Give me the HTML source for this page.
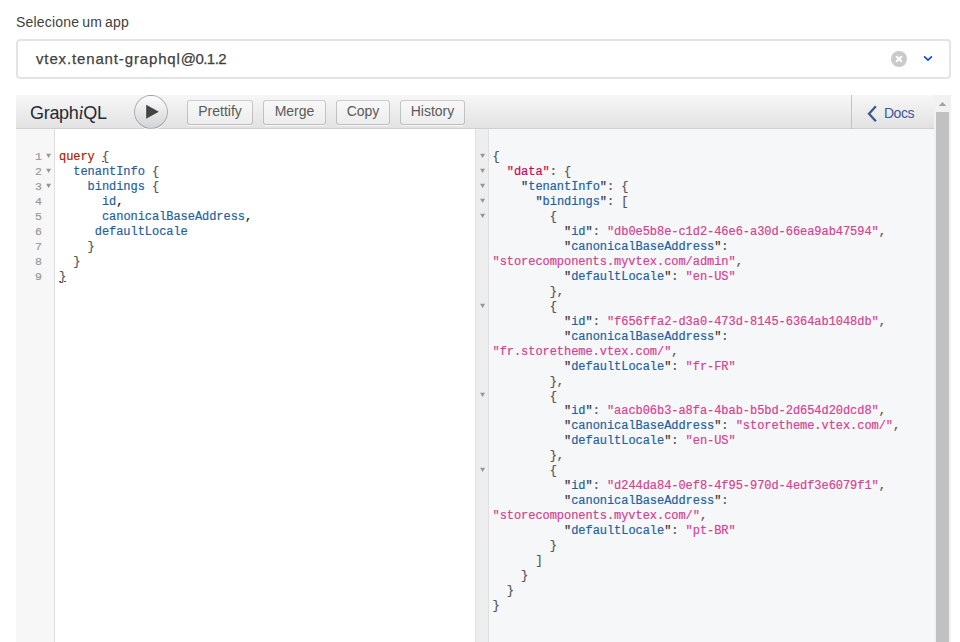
<!DOCTYPE html>
<html lang="pt-BR">
<head>
<meta charset="utf-8">
<title>GraphiQL</title>
<style>
*{box-sizing:border-box;margin:0;padding:0}
html,body{width:960px;height:642px;overflow:hidden;background:#fff}
body{position:relative;font-family:"Liberation Sans",sans-serif;color:#3f3f40}
.label{position:absolute;left:16px;top:12px;font-size:14px;line-height:20px;color:#3f3f40;letter-spacing:0.2px;word-spacing:-1.2px}
.select{position:absolute;left:16px;top:39px;width:935px;height:40px;border:2px solid #e3e4e6;border-radius:4px;background:#fff}
.select .val{position:absolute;left:18px;top:0;line-height:36px;font-size:15px;color:#3f3f40;letter-spacing:0.86px;-webkit-text-stroke:0.25px #3f3f40}.select .val span{letter-spacing:-0.55px}
.select svg{position:absolute}
.gq{position:absolute;left:16px;top:95px;width:918px;height:547px;background:#fff;overflow:hidden}
.topbar{position:absolute;left:0;top:0;width:918px;height:34px;background:linear-gradient(#f7f7f7,#e2e2e2);border-bottom:1px solid #d0d0d0}
.title{position:absolute;left:14px;top:1px;line-height:34px;font-size:18px;color:#262a35;letter-spacing:-0.3px}
.title em{font-family:"Liberation Serif",serif;font-style:italic}
.exec{position:absolute;left:118px;top:0;width:34px;height:34px;border-radius:17px;border:1px solid rgba(0,0,0,.25);background:linear-gradient(#fdfdfd,#d2d3d6);box-shadow:0 1px 0 #fff}
.exec svg{position:absolute;left:0;top:0}
.btn{position:absolute;top:5px;height:25px;border-radius:3px;background:linear-gradient(#f9f9f9,#ececec);box-shadow:inset 0 0 0 1px rgba(0,0,0,.2),0 1px 0 rgba(255,255,255,.7),inset 0 1px #fff;color:#5a5a5a;font-size:14px;line-height:23px;text-align:center}
.docs{position:absolute;left:835px;top:0;width:83px;height:34px;border-left:1px solid #c3c3c3;color:#3b5998;font-size:14px;line-height:34px}
.docs span{position:absolute;left:32px;top:1px;letter-spacing:-0.5px}
.docs svg{position:absolute;left:0;top:0}
.left{position:absolute;left:0;top:34px;width:459px;height:513px;background:#fff}
.gutter{position:absolute;left:0;top:0;width:39px;height:513px;background:#f7f7f7;border-right:1px solid #ddd}
.right{position:absolute;left:459px;top:34px;width:459px;height:513px;background:#f6f7f8;border-left:1px solid #e0e0e0}
.rgutter{position:absolute;left:0;top:0;width:13px;height:513px;background:#eeeeee;border-right:1px solid #e0e0e0}
pre{position:absolute;font-family:"Liberation Mono",monospace;font-size:12px;line-height:14.95px;letter-spacing:-0.05px;color:#141823;white-space:pre;-webkit-text-stroke-width:0.2px}
.ln{left:0;top:21.3px;width:26px;text-align:right;color:#999;font-size:11.6px}
.fold{position:absolute;width:8px;height:6px;margin:-1px 0 0 -1px}.fold path{fill:#969696}
.code{left:43px;top:21.3px}
.res{left:16.5px;top:21.27px}
.mb{text-decoration:underline;text-decoration-thickness:1px;text-underline-offset:1px}.k{color:#b11a04}.p{color:#1f61a0}.u{color:#555}.s{color:#d64292}.d{color:#d2054e}.q{color:#333}
.sb{position:absolute;left:934px;top:95px;width:17px;height:547px;background:#f1f1f1}
.sb .thumb{position:absolute;left:2px;top:17px;width:13px;height:530px;background:#c1c1c1}
.sb svg{position:absolute;left:0;top:0}
</style>
</head>
<body>
<div class="label">Selecione um app</div>
<div class="select">
  <div class="val">vtex.tenant-graphql<span>@0.1.2</span></div>
  <svg style="left:873px;top:10px" width="16" height="16" viewBox="0 0 16 16"><circle cx="8" cy="8" r="8" fill="#c8cacc"/><path d="M5.7 5.7l4.6 4.6M10.3 5.7l-4.6 4.6" stroke="#fff" stroke-width="2" stroke-linecap="round"/></svg>
  <svg style="left:904px;top:13px" width="12" height="10" viewBox="0 0 12 10"><path d="M2.6 2.8L6 6.1L9.4 2.8" fill="none" stroke="#134cd8" stroke-width="1.7" stroke-linecap="round" stroke-linejoin="round"/></svg>
</div>
<div class="gq">
  <div class="left">
    <div class="gutter">
<pre class="ln">1
2
3
4
5
6
7
8
9</pre>
      <svg class="fold" style="left:30px;top:25px" viewBox="0 0 8 6"><path d="M1.1 .8h5L3.6 5z"/></svg><svg class="fold" style="left:30px;top:40px" viewBox="0 0 8 6"><path d="M1.1 .8h5L3.6 5z"/></svg><svg class="fold" style="left:30px;top:55px" viewBox="0 0 8 6"><path d="M1.1 .8h5L3.6 5z"/></svg>
    </div>
<pre class="code"><span class="k">query</span> <span class="u mb">{</span>
  <span class="p">tenantInfo</span> <span class="u">{</span>
    <span class="p">bindings</span> <span class="u">{</span>
      <span class="p">id</span>,
      <span class="p">canonicalBaseAddress</span>,
     <span class="p">defaultLocale</span>
    <span class="u">}</span>
  <span class="u">}</span>
<span class="u mb">}</span></pre>
  </div>
  <div class="right">
    <div class="rgutter">
      <svg class="fold" style="left:4px;top:25px" viewBox="0 0 8 6"><path d="M1.1 .8h5L3.6 5z"/></svg><svg class="fold" style="left:4px;top:40px" viewBox="0 0 8 6"><path d="M1.1 .8h5L3.6 5z"/></svg><svg class="fold" style="left:4px;top:55px" viewBox="0 0 8 6"><path d="M1.1 .8h5L3.6 5z"/></svg><svg class="fold" style="left:4px;top:70px" viewBox="0 0 8 6"><path d="M1.1 .8h5L3.6 5z"/></svg><svg class="fold" style="left:4px;top:85px" viewBox="0 0 8 6"><path d="M1.1 .8h5L3.6 5z"/></svg><svg class="fold" style="left:4px;top:175px" viewBox="0 0 8 6"><path d="M1.1 .8h5L3.6 5z"/></svg><svg class="fold" style="left:4px;top:264px" viewBox="0 0 8 6"><path d="M1.1 .8h5L3.6 5z"/></svg><svg class="fold" style="left:4px;top:339px" viewBox="0 0 8 6"><path d="M1.1 .8h5L3.6 5z"/></svg>
    </div>
<pre class="res"><span class="u">{</span>
  <span class="d">"data"</span><span class="u">: {</span>
    <span class="q">"</span><span class="p">tenantInfo</span><span class="q">"</span><span class="u">: {</span>
      <span class="q">"</span><span class="p">bindings</span><span class="q">"</span><span class="u">: [</span>
        <span class="u">{</span>
          <span class="q">"</span><span class="p">id</span><span class="q">"</span><span class="u">:</span> <span class="s">"db0e5b8e-c1d2-46e6-a30d-66ea9ab47594"</span><span class="u">,</span>
          <span class="q">"</span><span class="p">canonicalBaseAddress</span><span class="q">"</span><span class="u">:</span>
<span class="s">"storecomponents.myvtex.com/admin"</span><span class="u">,</span>
          <span class="q">"</span><span class="p">defaultLocale</span><span class="q">"</span><span class="u">:</span> <span class="s">"en-US"</span>
        <span class="u">},</span>
        <span class="u">{</span>
          <span class="q">"</span><span class="p">id</span><span class="q">"</span><span class="u">:</span> <span class="s">"f656ffa2-d3a0-473d-8145-6364ab1048db"</span><span class="u">,</span>
          <span class="q">"</span><span class="p">canonicalBaseAddress</span><span class="q">"</span><span class="u">:</span>
<span class="s">"fr.storetheme.vtex.com/"</span><span class="u">,</span>
          <span class="q">"</span><span class="p">defaultLocale</span><span class="q">"</span><span class="u">:</span> <span class="s">"fr-FR"</span>
        <span class="u">},</span>
        <span class="u">{</span>
          <span class="q">"</span><span class="p">id</span><span class="q">"</span><span class="u">:</span> <span class="s">"aacb06b3-a8fa-4bab-b5bd-2d654d20dcd8"</span><span class="u">,</span>
          <span class="q">"</span><span class="p">canonicalBaseAddress</span><span class="q">"</span><span class="u">:</span> <span class="s">"storetheme.vtex.com/"</span><span class="u">,</span>
          <span class="q">"</span><span class="p">defaultLocale</span><span class="q">"</span><span class="u">:</span> <span class="s">"en-US"</span>
        <span class="u">},</span>
        <span class="u">{</span>
          <span class="q">"</span><span class="p">id</span><span class="q">"</span><span class="u">:</span> <span class="s">"d244da84-0ef8-4f95-970d-4edf3e6079f1"</span><span class="u">,</span>
          <span class="q">"</span><span class="p">canonicalBaseAddress</span><span class="q">"</span><span class="u">:</span>
<span class="s">"storecomponents.myvtex.com/"</span><span class="u">,</span>
          <span class="q">"</span><span class="p">defaultLocale</span><span class="q">"</span><span class="u">:</span> <span class="s">"pt-BR"</span>
        <span class="u">}</span>
      <span class="u">]</span>
    <span class="u">}</span>
  <span class="u">}</span>
<span class="u">}</span></pre>
  </div>
  <div class="topbar">
    <div class="title">Graph<em>i</em>QL</div>
    <div class="exec"><svg width="34" height="34" viewBox="0 0 34 34"><path d="M11.2 8.7L23.8 15.75L11.2 22.8Z" fill="#444"/></svg></div>
    <div class="btn" style="left:171px;width:66px">Prettify</div>
    <div class="btn" style="left:247px;width:63px">Merge</div>
    <div class="btn" style="left:320px;width:54px">Copy</div>
    <div class="btn" style="left:384px;width:65px">History</div>
    <div class="docs"><svg width="34" height="34" viewBox="0 0 34 34"><path d="M23.9 11.2L17 18.7L23.9 26.2" fill="none" stroke="#3b5998" stroke-width="2.3"/></svg><span>Docs</span></div>
  </div>
</div>
<div class="sb"><svg width="17" height="17" viewBox="0 0 17 17"><path d="M8.5 7L12.3 11H4.7Z" fill="#a3a3a3"/></svg><div class="thumb"></div></div>
</body>
</html>
